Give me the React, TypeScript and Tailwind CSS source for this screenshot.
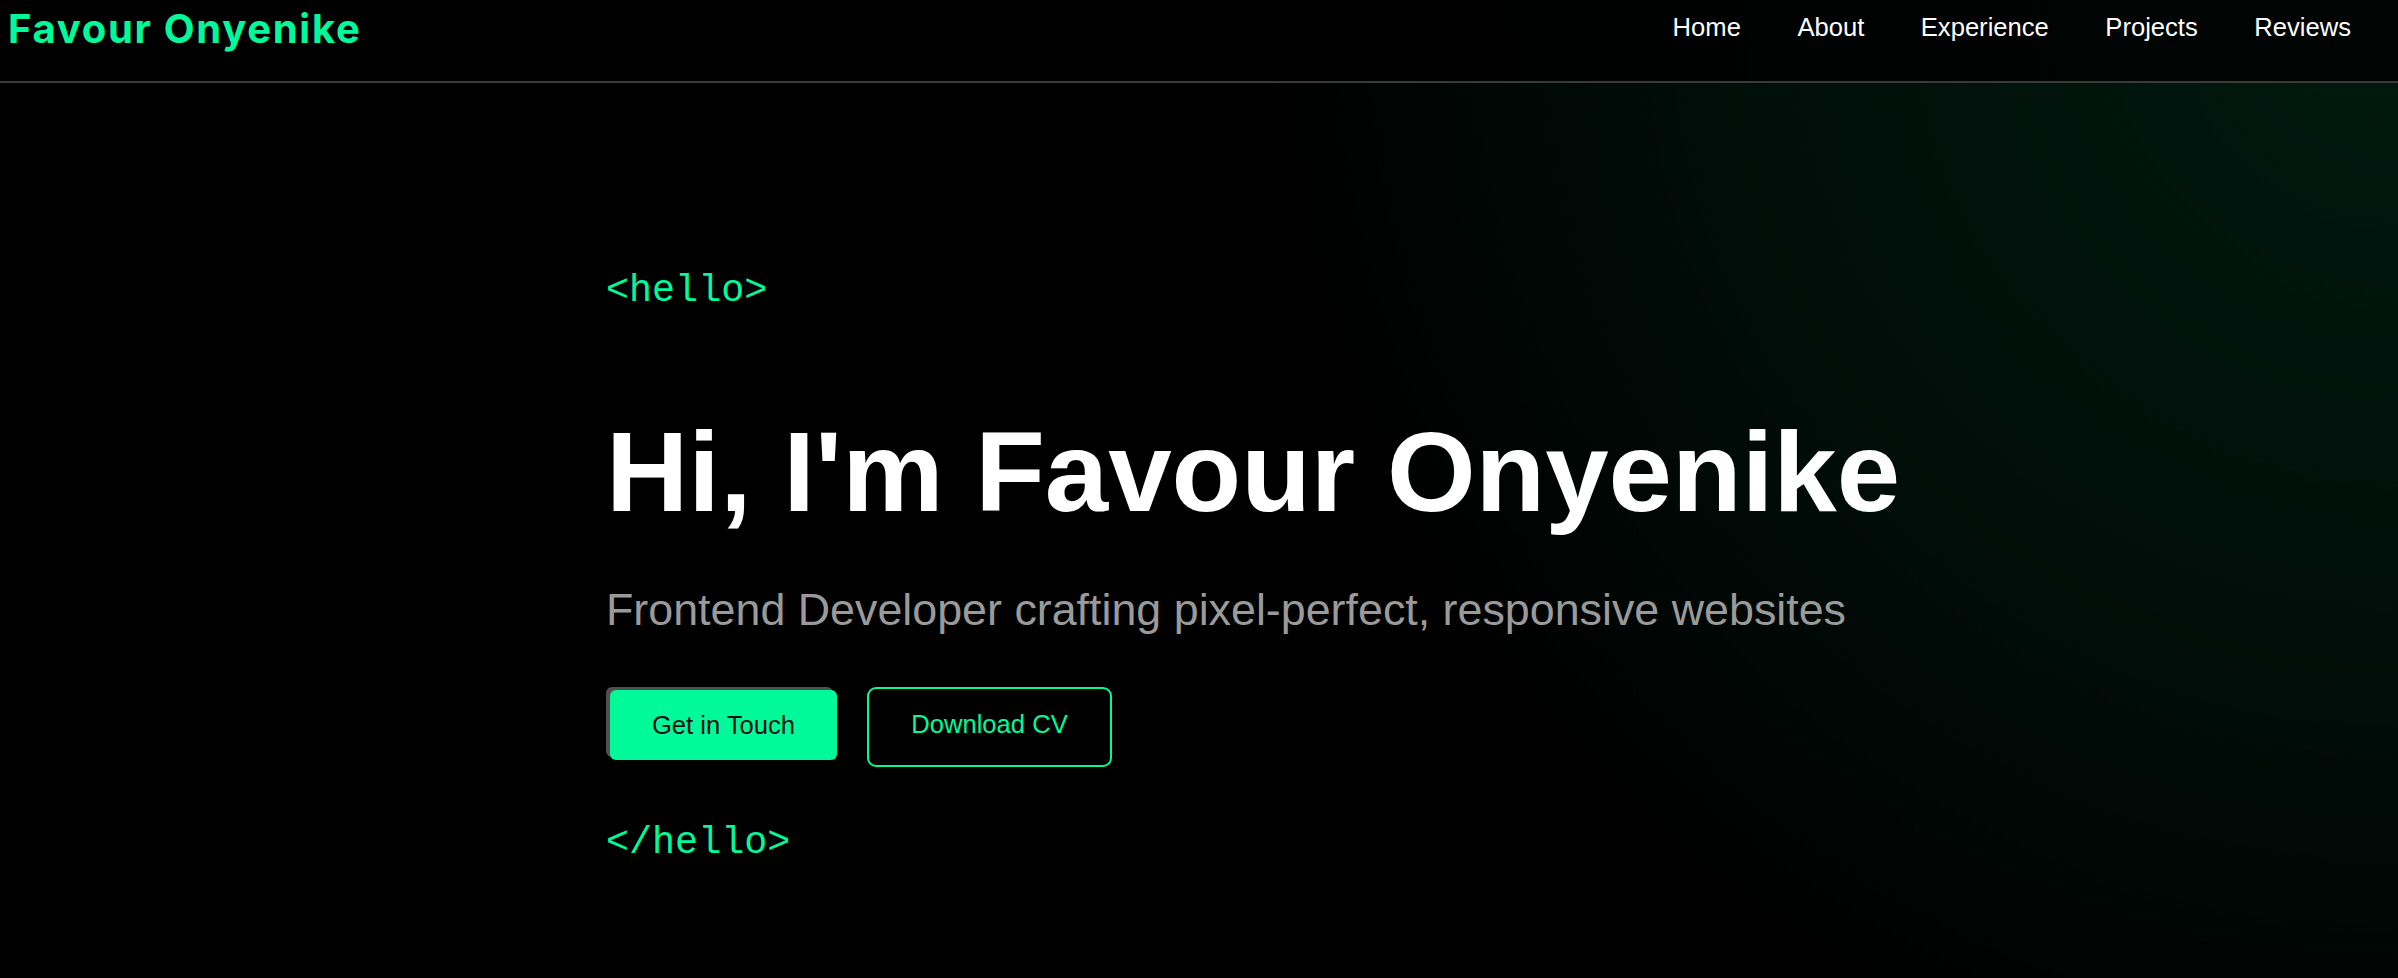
import React from "react";

const navLinks = ["Home", "About", "Experience", "Projects", "Reviews"];

const Header = () => {
    return (
        <header className="flex flex-row justify-between items-start h-[83px] bg-black/80 border-b-2 border-[#3a3a3a]">
            <a href="#" className="mt-[9px] pl-[8px] text-[40px] leading-none font-bold text-[#00fa9a] font-['Inter',sans-serif] tracking-[1.7px]">
                Favour Onyenike
            </a>
            <nav className="flex flex-row gap-[56.5px] mt-[15px] pr-[47px]">
                { navLinks.map((el: string) => {
                    return (
                        <a key={ el } href="#" className="text-white text-[25.6px] leading-none font-['Liberation_Sans',Arial,sans-serif]">{ el }</a>
                    );
                }) }
            </nav>
        </header>
    );
};

const Hero = () => {
    return (
        <main className="flex-1">
            <div className="mx-auto w-[1186px] flex flex-col items-start pt-[189px] font-['Liberation_Sans',Arial,sans-serif]">
                <span className="text-[38.4px] leading-none text-[#00fa9a] font-['Liberation_Mono','Courier_New',monospace]">&lt;hello&gt;</span>
                <h1 className="mt-[105px] text-[114px] leading-none font-bold text-white whitespace-nowrap">Hi, I'm Favour Onyenike</h1>
                <p className="mt-[58px] text-[44.8px] leading-none text-[#9a9a9a] whitespace-nowrap">
                    Frontend Developer crafting pixel-perfect, responsive websites
                </p>
                <div className="mt-[55px] flex flex-row items-start">
                    <button className="mt-[3px] ml-[4px] w-[227px] h-[70px] rounded-[6px] bg-[#00fa9a] text-[#111] text-[25.6px] shadow-[-4px_-3px_0_#505050]">
                        Get in Touch
                    </button>
                    <button className="ml-[30px] w-[245px] h-[80px] rounded-[9px] border-2 border-[#00fa9a] text-[#00fa9a] text-[25.6px] pb-[6px]">
                        Download CV
                    </button>
                </div>
                <span className="mt-[57px] text-[38.4px] leading-none text-[#00fa9a] font-['Liberation_Mono','Courier_New',monospace]">&lt;/hello&gt;</span>
            </div>
        </main>
    );
};

export default function App() {
    return (
        <div className="min-h-screen flex flex-col bg-black bg-[radial-gradient(circle_at_top_right,rgba(0,250,154,0.1)_0px,rgba(0,250,154,0.06)_650px,transparent_1150px)]">
            <Header />
            <Hero />
        </div>
    );
}
